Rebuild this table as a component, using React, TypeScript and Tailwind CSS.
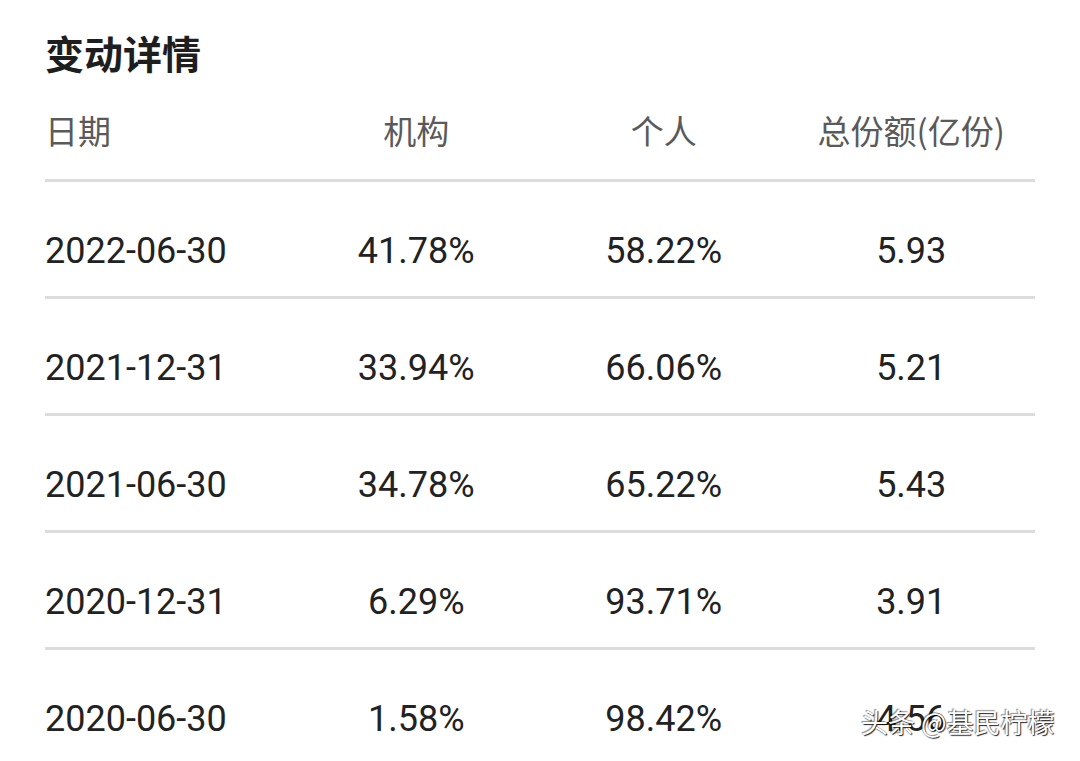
import React from "react";

const rows = [
  ["2022-06-30", "41.78%", "58.22%", "5.93"],
  ["2021-12-31", "33.94%", "66.06%", "5.21"],
  ["2021-06-30", "34.78%", "65.22%", "5.43"],
  ["2020-12-31", "6.29%", "93.71%", "3.91"],
  ["2020-06-30", "1.58%", "98.42%", "4.56"],
];

const numFont = { fontFamily: 'Roboto, "Noto Sans CJK SC", sans-serif' };
const cjkFont = { fontFamily: '"Noto Sans CJK SC", "Noto Sans", sans-serif' };

export default function App() {
  return (
    <div className="relative w-[1080px] h-[761px] overflow-hidden bg-white">
      <div className="px-[45px]">
        <div
          className="pt-[33px] text-[39px] leading-[39px] font-bold text-[#1e1e1e]"
          style={cjkFont}
        >
          变动详情
        </div>
        <div
          className="mt-[42px] pb-[32px] grid grid-cols-4 w-[990px] text-[33px] leading-[33px] text-[#5a5a5a]"
          style={cjkFont}
        >
          <div className="text-left">日期</div>
          <div className="text-center">机构</div>
          <div className="text-center">个人</div>
          <div className="text-center">总份额(亿份)</div>
        </div>
        <div className="w-[990px]">
          {rows.map((r) => (
            <div
              key={r[0]}
              className="grid grid-cols-4 border-t-[3px] border-[#dcdcdc] pt-[51px] pb-[27px] text-[36px] leading-[36px] text-[#222222]"
              style={numFont}
            >
              <div className="text-left">{r[0]}</div>
              <div className="text-center">{r[1]}</div>
              <div className="text-center">{r[2]}</div>
              <div className="text-center">{r[3]}</div>
            </div>
          ))}
        </div>
      </div>
      <div
        className="absolute left-[861px] top-[708px] text-[27px] leading-[27px] text-white whitespace-nowrap [text-shadow:1px_1px_1px_rgba(0,0,0,0.85),-1px_-1px_1px_rgba(0,0,0,0.45)]"
        style={cjkFont}
      >
        头条 @基民柠檬
      </div>
    </div>
  );
}
